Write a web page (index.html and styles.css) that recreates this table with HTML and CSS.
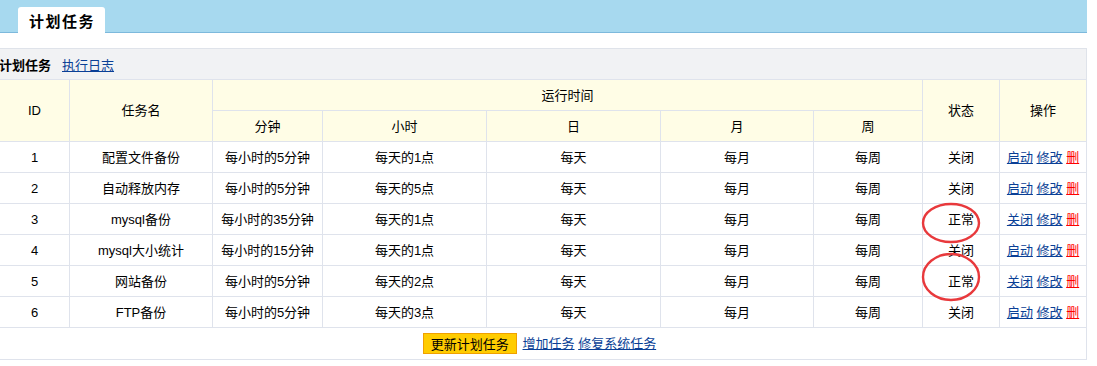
FILE: index.html
```html
<!DOCTYPE html>
<html lang="zh-CN">
<head>
<meta charset="utf-8">
<title>计划任务</title>
<link rel="stylesheet" href="styles.css">
</head>
<body>
<div class="page">
  <div class="topbar">
    <div class="tab">计划任务</div>
  </div>
  <div class="subbar">
    <span class="subtitle">计划任务</span>
    <a href="#" class="link">执行日志</a>
  </div>
  <table class="grid">
    <colgroup>
      <col class="c-id"><col class="c-name"><col class="c-min"><col class="c-hour"><col class="c-day"><col class="c-month"><col class="c-week"><col class="c-state"><col class="c-op">
    </colgroup>
    <thead>
      <tr>
        <th rowspan="2">ID</th>
        <th rowspan="2">任务名</th>
        <th colspan="5">运行时间</th>
        <th rowspan="2">状态</th>
        <th rowspan="2">操作</th>
      </tr>
      <tr>
        <th>分钟</th><th>小时</th><th>日</th><th>月</th><th>周</th>
      </tr>
    </thead>
    <tbody>
      <tr>
        <td>1</td><td>配置文件备份</td><td>每小时的5分钟</td><td>每天的1点</td><td>每天</td><td>每月</td><td>每周</td><td>关闭</td>
        <td class="ops"><a href="#" class="link">启动</a> <a href="#" class="link">修改</a> <a href="#" class="link del">删</a></td>
      </tr>
      <tr>
        <td>2</td><td>自动释放内存</td><td>每小时的5分钟</td><td>每天的5点</td><td>每天</td><td>每月</td><td>每周</td><td>关闭</td>
        <td class="ops"><a href="#" class="link">启动</a> <a href="#" class="link">修改</a> <a href="#" class="link del">删</a></td>
      </tr>
      <tr>
        <td>3</td><td>mysql备份</td><td>每小时的35分钟</td><td>每天的1点</td><td>每天</td><td>每月</td><td>每周</td>
        <td class="state">正常<svg class="mark mark-a" width="60" height="42" viewBox="0 0 60 42"><ellipse cx="30" cy="21" rx="28" ry="19" /></svg></td>
        <td class="ops"><a href="#" class="link">关闭</a> <a href="#" class="link">修改</a> <a href="#" class="link del">删</a></td>
      </tr>
      <tr>
        <td>4</td><td>mysql大小统计</td><td>每小时的15分钟</td><td>每天的1点</td><td>每天</td><td>每月</td><td>每周</td><td>关闭</td>
        <td class="ops"><a href="#" class="link">启动</a> <a href="#" class="link">修改</a> <a href="#" class="link del">删</a></td>
      </tr>
      <tr>
        <td>5</td><td>网站备份</td><td>每小时的5分钟</td><td>每天的2点</td><td>每天</td><td>每月</td><td>每周</td>
        <td class="state">正常<svg class="mark mark-b" width="60" height="50" viewBox="0 0 60 50"><ellipse cx="30" cy="25" rx="28" ry="23" /></svg></td>
        <td class="ops"><a href="#" class="link">关闭</a> <a href="#" class="link">修改</a> <a href="#" class="link del">删</a></td>
      </tr>
      <tr>
        <td>6</td><td>FTP备份</td><td>每小时的5分钟</td><td>每天的3点</td><td>每天</td><td>每月</td><td>每周</td><td>关闭</td>
        <td class="ops"><a href="#" class="link">启动</a> <a href="#" class="link">修改</a> <a href="#" class="link del">删</a></td>
      </tr>
    </tbody>
    <tfoot>
      <tr>
        <td colspan="9" class="foot">
          <button class="btn" type="button">更新计划任务</button>
          <a href="#" class="link">增加任务</a>
          <a href="#" class="link">修复系统任务</a>
        </td>
      </tr>
    </tfoot>
  </table>
</div>
</body>
</html>
```

FILE: styles.css
```css
html, body {
  margin: 0;
  padding: 0;
  background: #ffffff;
}

body {
  font-family: "Liberation Sans", "Noto Sans CJK SC", sans-serif;
  font-size: 13px;
  color: #000;
}

.page {
  width: 1087px;
}

.topbar {
  height: 32px;
  background: #a7d9ef;
  border-bottom: 1px solid #7db9dc;
  display: flex;
  align-items: flex-end;
  padding-left: 18px;
}

.tab {
  width: 87px;
  height: 26px;
  margin-bottom: -1px;
  background: #ffffff;
  border-radius: 3px 3px 0 0;
  font-family: "Noto Sans CJK SC", sans-serif;
  font-size: 15px;
  font-weight: bold;
  letter-spacing: 1.5px;
  line-height: 27px;
  padding-left: 11px;
  box-sizing: border-box;
}

.subbar {
  margin-top: 15px;
  height: 30px;
  background: #f1f2f4;
  border-top: 1px solid #dfe3ea;
  border-right: 1px solid #dfe3ea;
  display: flex;
  align-items: center;
  gap: 11px;
  width: 1086px;
}

.subtitle {
  font-family: "Noto Sans CJK SC", sans-serif;
  font-weight: bold;
  margin-left: -1px;
}

.link {
  color: #0a3f96;
  text-decoration: underline;
}

.del {
  color: #ff0000;
}

.grid {
  border-collapse: collapse;
  table-layout: fixed;
  width: 1088px;
  margin-left: -1px;
}

.c-id { width: 70px; }
.c-name { width: 143px; }
.c-min { width: 110px; }
.c-hour { width: 164px; }
.c-day { width: 174px; }
.c-month { width: 153px; }
.c-week { width: 109px; }
.c-state { width: 77px; }
.c-op { width: 87px; }

.grid th,
.grid td {
  border: 1px solid #dfe3ec;
  height: 30px;
  padding: 0;
  text-align: center;
  vertical-align: middle;
  font-weight: normal;
  line-height: 15px;
}

.grid th {
  background: #fffde6;
}

.state {
  position: relative;
}

.mark {
  position: absolute;
  left: -2px;
  fill: none;
  stroke: #e8393c;
  stroke-width: 2.4;
  pointer-events: none;
}

.mark-a {
  top: -2px;
}

.mark-b {
  top: -14px;
}

.grid td.foot {
  height: 31px;
  padding-right: 7px;
}

.btn {
  background: #ffcc00;
  border: 1px solid #f0a000;
  font-family: "Noto Sans CJK SC", sans-serif;
  font-size: 13px;
  color: #000;
  width: 94px;
  height: 21px;
  padding: 0;
  margin: 0 2px 0 0;
  vertical-align: middle;
  line-height: 19px;
}

.foot .link {
  vertical-align: middle;
}
```
